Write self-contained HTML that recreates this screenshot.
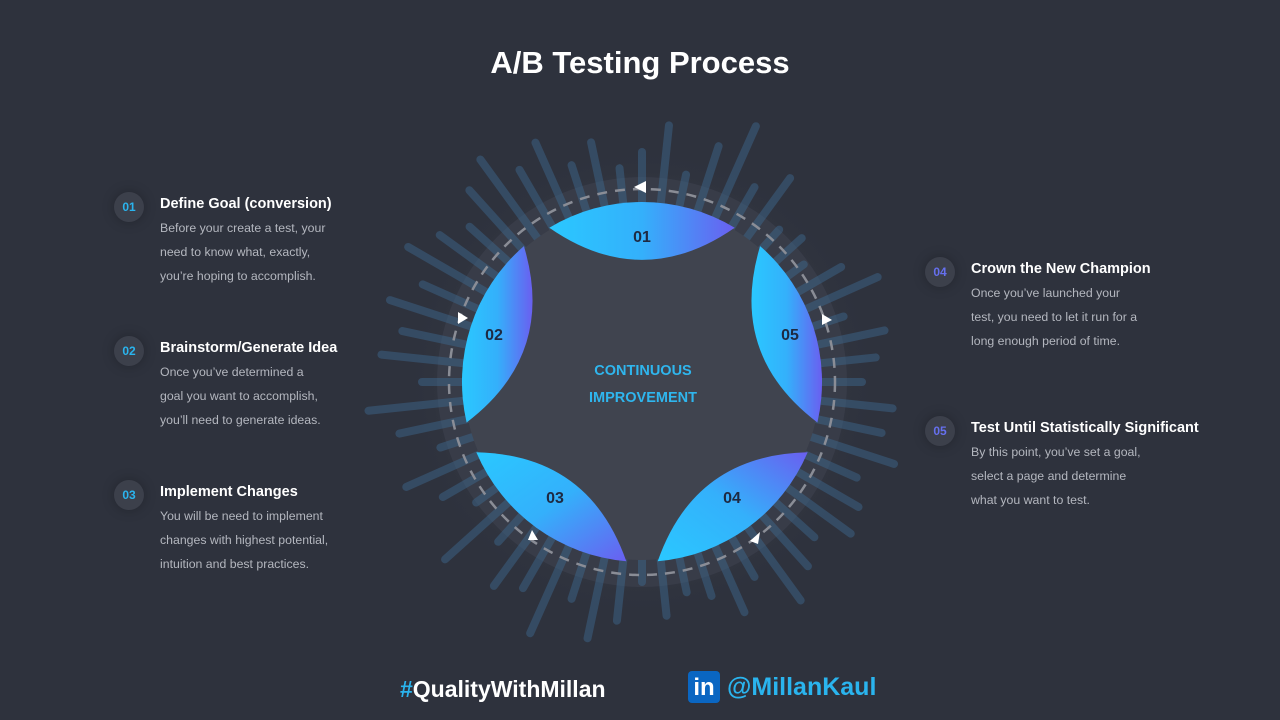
<!DOCTYPE html>
<html><head><meta charset="utf-8"><style>
body{margin:0;width:1280px;height:720px;background:#2e323d;overflow:hidden;position:relative;font-family:"Liberation Sans","DejaVu Sans",sans-serif;}
.t{position:absolute;left:0;width:1280px;top:45px;text-align:center;color:#fff;font-weight:bold;font-size:31px;letter-spacing:0}
.item{position:absolute;width:240px}
.num{position:absolute;left:-46px;top:-3px;width:30px;height:30px;border-radius:50%;background:#3c404b;box-shadow:0 0 12px rgba(0,0,0,.25);font-size:12px;font-weight:bold;text-align:center;line-height:30px}
.h{color:#fff;font-weight:bold;font-size:14.5px;line-height:18px}
.d{color:#b4b7bf;font-size:12.3px;line-height:24px;margin-top:3px}
.f{position:absolute;top:676px;font-weight:bold;font-size:23px}
</style></head><body>
<div class="t">A/B Testing Process</div>
<svg width="1280" height="720" style="position:absolute;left:0;top:0">
<defs>
<linearGradient id="g" x1="0" y1="0" x2="1" y2="0"><stop offset="0" stop-color="#2ac8ff"/><stop offset=".5" stop-color="#34b0fb"/><stop offset="1" stop-color="#6a5ff0"/></linearGradient>
<linearGradient id="g3" x1="0" y1="0" x2="1" y2="1"><stop offset="0" stop-color="#2ac8ff"/><stop offset=".5" stop-color="#34b0fb"/><stop offset="1" stop-color="#6a5ff0"/></linearGradient>
<linearGradient id="g4" x1="0" y1="1" x2="1" y2="0"><stop offset="0" stop-color="#2ac8ff"/><stop offset=".5" stop-color="#34b0fb"/><stop offset="1" stop-color="#6a5ff0"/></linearGradient>
<radialGradient id="glow"><stop offset=".7" stop-color="#3a3e4a"/><stop offset="1" stop-color="#2e323d" stop-opacity="0"/></radialGradient>
</defs>
<circle cx="642" cy="382" r="240" fill="url(#glow)" opacity=".6"/>
<circle cx="642" cy="382" r="205" fill="#383c48"/>
<g transform="translate(642,382)" stroke="#3d6a92" stroke-opacity=".45" stroke-width="8" stroke-linecap="round">
<line y1="-150" y2="-230" transform="rotate(0)"/><line y1="-150" y2="-258" transform="rotate(6)"/><line y1="-150" y2="-212" transform="rotate(12)"/><line y1="-150" y2="-248" transform="rotate(18)"/><line y1="-150" y2="-280" transform="rotate(24)"/><line y1="-150" y2="-225" transform="rotate(30)"/><line y1="-150" y2="-252" transform="rotate(36)"/><line y1="-150" y2="-205" transform="rotate(42)"/><line y1="-150" y2="-215" transform="rotate(48)"/><line y1="-150" y2="-200" transform="rotate(54)"/>
<line y1="-150" y2="-230" transform="rotate(60)"/><line y1="-150" y2="-258" transform="rotate(66)"/><line y1="-150" y2="-212" transform="rotate(72)"/><line y1="-150" y2="-248" transform="rotate(78)"/><line y1="-150" y2="-235" transform="rotate(84)"/><line y1="-150" y2="-220" transform="rotate(90)"/><line y1="-150" y2="-252" transform="rotate(96)"/><line y1="-150" y2="-245" transform="rotate(102)"/><line y1="-150" y2="-265" transform="rotate(108)"/><line y1="-150" y2="-235" transform="rotate(114)"/>
<line y1="-150" y2="-250" transform="rotate(120)"/><line y1="-150" y2="-258" transform="rotate(126)"/><line y1="-150" y2="-232" transform="rotate(132)"/><line y1="-150" y2="-248" transform="rotate(138)"/><line y1="-150" y2="-270" transform="rotate(144)"/><line y1="-150" y2="-225" transform="rotate(150)"/><line y1="-150" y2="-252" transform="rotate(156)"/><line y1="-150" y2="-225" transform="rotate(162)"/><line y1="-150" y2="-215" transform="rotate(168)"/><line y1="-150" y2="-235" transform="rotate(174)"/>
<line y1="-150" y2="-200" transform="rotate(180)"/><line y1="-150" y2="-240" transform="rotate(186)"/><line y1="-150" y2="-262" transform="rotate(192)"/><line y1="-150" y2="-228" transform="rotate(198)"/><line y1="-150" y2="-275" transform="rotate(204)"/><line y1="-150" y2="-238" transform="rotate(210)"/><line y1="-150" y2="-252" transform="rotate(216)"/><line y1="-150" y2="-215" transform="rotate(222)"/><line y1="-150" y2="-265" transform="rotate(228)"/><line y1="-150" y2="-205" transform="rotate(234)"/>
<line y1="-150" y2="-230" transform="rotate(240)"/><line y1="-150" y2="-258" transform="rotate(246)"/><line y1="-150" y2="-212" transform="rotate(252)"/><line y1="-150" y2="-248" transform="rotate(258)"/><line y1="-150" y2="-275" transform="rotate(264)"/><line y1="-150" y2="-220" transform="rotate(270)"/><line y1="-150" y2="-262" transform="rotate(276)"/><line y1="-150" y2="-245" transform="rotate(282)"/><line y1="-150" y2="-265" transform="rotate(288)"/><line y1="-150" y2="-240" transform="rotate(294)"/>
<line y1="-150" y2="-270" transform="rotate(300)"/><line y1="-150" y2="-250" transform="rotate(306)"/><line y1="-150" y2="-232" transform="rotate(312)"/><line y1="-150" y2="-258" transform="rotate(318)"/><line y1="-150" y2="-275" transform="rotate(324)"/><line y1="-150" y2="-245" transform="rotate(330)"/><line y1="-150" y2="-262" transform="rotate(336)"/><line y1="-150" y2="-228" transform="rotate(342)"/><line y1="-150" y2="-245" transform="rotate(348)"/><line y1="-150" y2="-215" transform="rotate(354)"/>
</g>
<circle cx="642" cy="382" r="193" fill="none" stroke="#8a8d96" stroke-width="2.5" stroke-dasharray="10 8"/>
<circle cx="642" cy="382" r="178" fill="#40444f"/>
<g transform="translate(642,382)" fill="url(#g)">
<path d="M-92.7,-154.3 A180 180 0 0 1 92.7,-154.3 Q0,-90 -92.7,-154.3 Z"/>
<path d="M118.1,-135.9 A180 180 0 0 1 175.4,40.5 Q85.6,-27.8 118.1,-135.9 Z"/>
<path fill="url(#g4)" d="M165.7,70.3 A180 180 0 0 1 15.7,179.3 Q52.9,72.8 165.7,70.3 Z"/>
<path fill="url(#g3)" d="M-15.7,179.3 A180 180 0 0 1 -165.7,70.3 Q-52.9,72.8 -15.7,179.3 Z"/>
<path d="M-175.4,40.5 A180 180 0 0 1 -118.1,-135.9 Q-85.6,-27.8 -175.4,40.5 Z"/>
</g>
<g fill="#1e2a42" font-weight="bold" font-size="16" text-anchor="middle" font-family="Liberation Sans, sans-serif">
<text x="642" y="242">01</text><text x="494" y="340">02</text><text x="555" y="503">03</text><text x="732" y="503">04</text><text x="790" y="340">05</text>
</g>
<g fill="#2fb6ee" font-weight="bold" font-size="14.5" text-anchor="middle" font-family="Liberation Sans, sans-serif">
<text x="643" y="375">CONTINUOUS</text><text x="643" y="402">IMPROVEMENT</text>
</g>
<g fill="#fff">
<path d="M634,187 l12,-6 v12 z"/>
<path d="M458,312 l10,6 -10,6 z"/>
<path d="M822,314 l10,6 -10,5 z"/>
<path d="M528,540 l4,-10 6,10 z"/>
<path d="M750,541 l10,-9 -2,12 z"/>
</g>
</svg>
<div class="item" style="left:160px;top:195px"><div class="num" style="color:#2ab4ee">01</div><div class="h">Define Goal (conversion)</div><div class="d">Before your create a test, your<br>need to know what, exactly,<br>you’re hoping to accomplish.</div></div>
<div class="item" style="left:160px;top:339px"><div class="num" style="color:#2ab4ee">02</div><div class="h">Brainstorm/Generate Idea</div><div class="d">Once you’ve determined a<br>goal you want to accomplish,<br>you’ll need to generate ideas.</div></div>
<div class="item" style="left:160px;top:483px"><div class="num" style="color:#2ab4ee">03</div><div class="h">Implement Changes</div><div class="d">You will be need to implement<br>changes with highest potential,<br>intuition and best practices.</div></div>
<div class="item" style="left:971px;top:260px;width:260px"><div class="num" style="color:#6670ef">04</div><div class="h">Crown the New Champion</div><div class="d">Once you’ve launched your<br>test, you need to let it run for a<br>long enough period of time.</div></div>
<div class="item" style="left:971px;top:419px;width:280px"><div class="num" style="color:#6670ef">05</div><div class="h">Test Until Statistically Significant</div><div class="d">By this point, you’ve set a goal,<br>select a page and determine<br>what you want to test.</div></div>
<div class="f" style="left:400px;color:#fff"><span style="color:#2ab4ee">#</span>QualityWithMillan</div>
<div style="position:absolute;left:688px;top:671px;width:32px;height:32px;background:#0a66c2;border-radius:4px;color:#fff;font-weight:bold;font-size:24px;line-height:33px;text-align:center">in</div>
<div class="f" style="left:727px;top:673px;color:#2ab4ee;font-size:25px">@MillanKaul</div>
</body></html>
